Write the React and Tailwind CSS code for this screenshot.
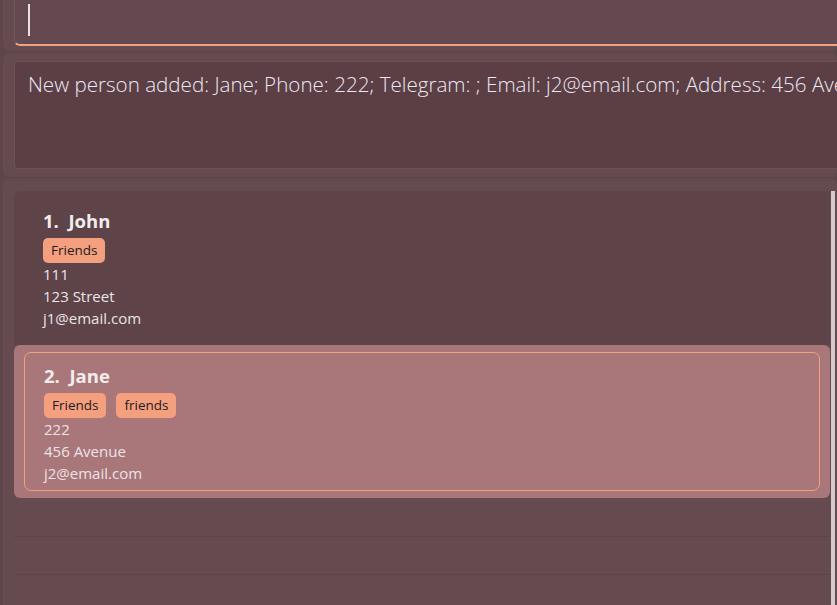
import React from "react";

const font = { fontFamily: '"Open Sans", "Noto Sans", sans-serif' };

function Tag({ children }) {
  return (
    <span className="inline-flex h-[25px] items-center rounded-[5px] bg-[#f4a07f] px-[8px] text-[13.5px] font-medium text-[#231a1d]">
      {children}
    </span>
  );
}

function Card({ idx, name, tags, phone, address, email, selected }) {
  const inner = (
    <div className="flex flex-col">
      <div className="h-[22px] text-[18.5px] font-bold leading-[22px] text-[#f2eded]">
        {idx}.&nbsp;&nbsp;{name}
      </div>
      <div className="mt-[6px] flex gap-[10px]">
        {tags.map((t) => (
          <Tag key={t}>{t}</Tag>
        ))}
      </div>
      <div className="text-[15px] leading-[22px] text-[#ece4e6]">
        <div>{phone}</div>
        <div>{address}</div>
        <div>{email}</div>
      </div>
    </div>
  );
  if (selected) {
    return (
      <div className="h-[153px] rounded-[6px] bg-[#a9767a] p-[7px_10px_7px_10px]">
        <div className="h-[139px] rounded-[7px] border-[1.5px] border-[#f3a07f] pl-[19px] pt-[12px]">
          {inner}
        </div>
      </div>
    );
  }
  return (
    <div className="h-[154px] rounded-tl-[6px] bg-[#5e4349] pl-[29px] pt-[19px]">{inner}</div>
  );
}

export default function App() {
  return (
    <div
      className="flex h-[605px] w-[837px] flex-col gap-[2px] overflow-hidden bg-[#5e454a]"
      style={font}
    >
      {/* command box */}
      <div className="ml-[3px] h-[51px] shrink-0 rounded-b-[6px] bg-[#654a50] pl-[11px]">
        <div className="h-[46px] rounded-bl-[6px] border-b-[2px] border-l border-[#6e555b] border-b-[#f0a582] bg-[#644950] pl-[13px] pt-[4px]">
          <div className="h-[32px] w-[1.5px] bg-[#e8e2e4]" />
        </div>
      </div>

      {/* result display */}
      <div className="ml-[3px] h-[124px] shrink-0 rounded-[6px] bg-[#654a50] pl-[11px] pt-[8px]">
        <div className="h-[108px] overflow-hidden whitespace-nowrap rounded-l-[4px] border border-r-0 border-[#6c5258] bg-[#5b3f45] pl-[13px] pt-[7px] text-[20.6px] font-light text-[#eee8f4]">
          New person added: Jane; Phone: 222; Telegram: ; Email: j2@email.com; Address: 456 Avenue; Tags: [Friends][friends]
        </div>
      </div>

      {/* person list */}
      <div className="ml-[3px] flex-1 rounded-t-[6px] bg-[#654a50] pl-[11px] pt-[12px]">
        <div className="flex h-full">
          <div className="flex flex-1 flex-col">
            <Card
              idx={1}
              name="John"
              tags={["Friends"]}
              phone="111"
              address="123 Street"
              email="j1@email.com"
            />
            <Card
              idx={2}
              name="Jane"
              tags={["Friends", "friends"]}
              phone="222"
              address="456 Avenue"
              email="j2@email.com"
              selected
            />
            <div className="h-[39px] border-b border-[#5e4349]" />
            <div className="h-[38px] border-b border-[#5e4349]" />
            <div className="flex-1" />
          </div>
          <div className="ml-[1px] w-[4px] bg-[#d2cacd]" />
          <div className="w-[2px]" />
        </div>
      </div>
    </div>
  );
}
